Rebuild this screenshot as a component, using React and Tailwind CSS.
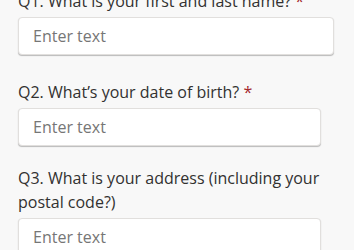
import React from 'react';

const inputClass =
  'h-[38px] bg-white rounded border border-[#e1dfdd] shadow-[0_1px_1px_rgba(0,0,0,0.25)] flex items-center px-[14px] text-[#767676] text-base';

export default function App() {
  return (
    <div
      className="w-[354px] h-[250px] overflow-hidden bg-[#f8f8f8] pl-[18px]"
      style={{ fontFamily: '"Open Sans", "Noto Sans", sans-serif' }}
    >
      <div className="flex flex-col -mt-[10px]">
        <div className="text-[#323130] text-base leading-[22px]">
          Q1. What is your first and last name? <span className="text-[#a4262c]">*</span>
        </div>
        <div className={`${inputClass} w-[316px] mt-[5px]`}>Enter text</div>

        <div className="text-[#323130] text-base leading-[22px] mt-[26px]">
          Q2. What’s your date of birth? <span className="text-[#a4262c]">*</span>
        </div>
        <div className={`${inputClass} w-[303px] mt-[5px] h-[37px]`}>Enter text</div>

        <div className="text-[#323130] text-base leading-[23.5px] mt-[21px] w-[310px]">
          Q3. What is your address (including your postal code?)
        </div>
        <div className={`${inputClass} w-[303px] mt-[4px]`}>Enter text</div>
      </div>
    </div>
  );
}
